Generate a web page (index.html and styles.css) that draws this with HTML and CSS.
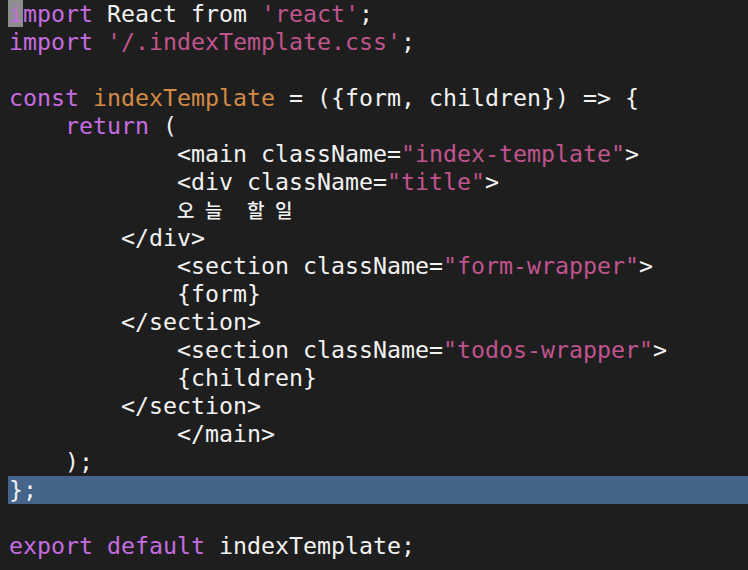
FILE: index.html
```html
<!DOCTYPE html>
<html>
<head>
<meta charset="utf-8">
<link rel="stylesheet" href="styles.css">
</head>
<body>
<div class="editor">
<div class="line"><span class="kw"><span class="cursor">i</span>mport</span> React from <span class="str">'react'</span>;</div>
<div class="line"><span class="kw">import</span> <span class="str">'/.indexTemplate.css'</span>;</div>
<div class="line"> </div>
<div class="line"><span class="kw">const</span> <span class="fn">indexTemplate</span> = ({form, children}) =&gt; {</div>
<div class="line">    <span class="kw">return</span> (</div>
<div class="line">            &lt;main className=<span class="str">"index-template"</span>&gt;</div>
<div class="line">            &lt;div className=<span class="str">"title"</span>&gt;</div>
<div class="line">            <span class="wide">오</span><span class="wide">늘</span> <span class="wide">할</span><span class="wide">일</span></div>
<div class="line">        &lt;/div&gt;</div>
<div class="line">            &lt;section className=<span class="str">"form-wrapper"</span>&gt;</div>
<div class="line">            {form}</div>
<div class="line">        &lt;/section&gt;</div>
<div class="line">            &lt;section className=<span class="str">"todos-wrapper"</span>&gt;</div>
<div class="line">            {children}</div>
<div class="line">        &lt;/section&gt;</div>
<div class="line">            &lt;/main&gt;</div>
<div class="line">    );</div>
<div class="line selected">};</div>
<div class="line"> </div>
<div class="line"><span class="kw">export</span> <span class="kw">default</span> indexTemplate;</div>
</div>
</body>
</html>
```
FILE: styles.css
```css
html, body {
  margin: 0;
  padding: 0;
  background: #1e1e1e;
  height: 100%;
  overflow: hidden;
}
.editor {
  padding-left: 8px;
  font-family: "DejaVu Sans Mono", monospace;
  font-size: 23.25px;
  line-height: 28px;
  color: #f2f2f2;
}
.line {
  height: 28px;
  white-space: pre;
  padding-left: 1px;
}
.selected {
  background: #45648a;
}
.kw { color: #c56de0; }
.str { color: #c0548e; }
.fn { color: #d28a45; }
.cursor {
  background: #8e8e8e;
  margin-left: -1px;
  padding-left: 1px;
}
.wide {
  display: inline-block;
  width: 28px;
  font-family: "Noto Sans CJK KR", sans-serif;
  font-size: 19px;
  font-weight: 500;
  line-height: 28px;
  vertical-align: baseline;
}
```
